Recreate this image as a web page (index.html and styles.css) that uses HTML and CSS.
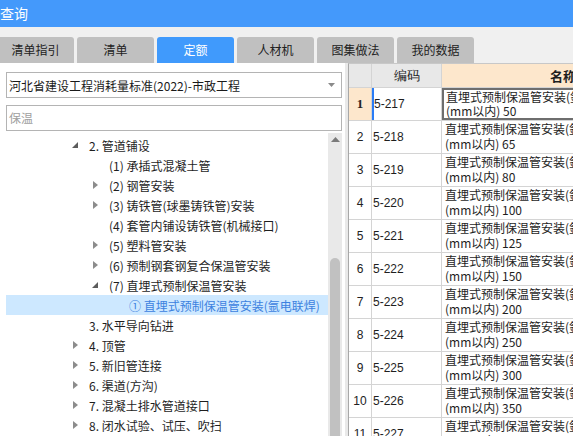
FILE: index.html
```html
<!DOCTYPE html>
<html lang="zh">
<head>
<meta charset="utf-8">
<title>查询</title>
<link rel="stylesheet" href="styles.css">
</head>
<body>
<div class="app">
  <div class="titlebar">查询</div>
  <div class="tabs">
    <div class="tab">清单指引</div>
    <div class="tab">清单</div>
    <div class="tab active">定额</div>
    <div class="tab">人材机</div>
    <div class="tab">图集做法</div>
    <div class="tab">我的数据</div>
  </div>
  <div class="main">
    <div class="left">
      <div class="select">
        <span>河北省建设工程消耗量标准(2022)-市政工程</span>
        <svg class="caret" width="7" height="4" viewBox="0 0 7 4"><polygon points="0,0 7,0 3.5,4" fill="#8a8a8a"/></svg>
      </div>
      <div class="search">保温</div>
      <div class="tree">
        <div class="list">
          <div class="node l1"><span class="arr"><svg width="6" height="6" viewBox="0 0 6 6"><polygon points="6,0 6,6 0,6" fill="#5c5c5c"/></svg></span><span class="txt">2. 管道铺设</span></div>
          <div class="node l2"><span class="arr"></span><span class="txt">(1) 承插式混凝土管</span></div>
          <div class="node l2"><span class="arr"><svg width="5" height="8" viewBox="0 0 5 8"><polygon points="0,0 5,4 0,8" fill="#8c8c8c"/></svg></span><span class="txt">(2) 钢管安装</span></div>
          <div class="node l2"><span class="arr"><svg width="5" height="8" viewBox="0 0 5 8"><polygon points="0,0 5,4 0,8" fill="#8c8c8c"/></svg></span><span class="txt">(3) 铸铁管(球墨铸铁管)安装</span></div>
          <div class="node l2"><span class="arr"></span><span class="txt">(4) 套管内铺设铸铁管(机械接口)</span></div>
          <div class="node l2"><span class="arr"><svg width="5" height="8" viewBox="0 0 5 8"><polygon points="0,0 5,4 0,8" fill="#8c8c8c"/></svg></span><span class="txt">(5) 塑料管安装</span></div>
          <div class="node l2"><span class="arr"><svg width="5" height="8" viewBox="0 0 5 8"><polygon points="0,0 5,4 0,8" fill="#8c8c8c"/></svg></span><span class="txt">(6) 预制钢套钢复合保温管安装</span></div>
          <div class="node l2"><span class="arr"><svg width="6" height="6" viewBox="0 0 6 6"><polygon points="6,0 6,6 0,6" fill="#5c5c5c"/></svg></span><span class="txt">(7) 直埋式预制保温管安装</span></div>
          <div class="node l3 selected"><span class="arr"></span><span class="txt">① 直埋式预制保温管安装(氩电联焊)</span></div>
          <div class="node l1"><span class="arr"></span><span class="txt">3. 水平导向钻进</span></div>
          <div class="node l1"><span class="arr"><svg width="5" height="8" viewBox="0 0 5 8"><polygon points="0,0 5,4 0,8" fill="#8c8c8c"/></svg></span><span class="txt">4. 顶管</span></div>
          <div class="node l1"><span class="arr"><svg width="5" height="8" viewBox="0 0 5 8"><polygon points="0,0 5,4 0,8" fill="#8c8c8c"/></svg></span><span class="txt">5. 新旧管连接</span></div>
          <div class="node l1"><span class="arr"><svg width="5" height="8" viewBox="0 0 5 8"><polygon points="0,0 5,4 0,8" fill="#8c8c8c"/></svg></span><span class="txt">6. 渠道(方沟)</span></div>
          <div class="node l1"><span class="arr"><svg width="5" height="8" viewBox="0 0 5 8"><polygon points="0,0 5,4 0,8" fill="#8c8c8c"/></svg></span><span class="txt">7. 混凝土排水管道接口</span></div>
          <div class="node l1"><span class="arr"><svg width="5" height="8" viewBox="0 0 5 8"><polygon points="0,0 5,4 0,8" fill="#8c8c8c"/></svg></span><span class="txt">8. 闭水试验、试压、吹扫</span></div>
        </div>
        <div class="vscroll">
          <svg class="up" width="9" height="5" viewBox="0 0 9 5"><polygon points="0,5 9,5 4.5,0" fill="#7a7a7a"/></svg>
          <div class="thumb"></div>
        </div>
      </div>
    </div>
    <div class="right">
      <div class="grid">
        <div class="row head">
          <div class="c num"></div>
          <div class="c code">编码</div>
          <div class="c name">名称</div>
        </div>
        <div class="row cur">
          <div class="c num">1</div>
          <div class="c code">5-217</div>
          <div class="c name"><div>直埋式预制保温管安装(氩电联焊) 公称直径</div><div>(mm以内) 50</div></div>
        </div>
        <div class="row"><div class="c num">2</div><div class="c code">5-218</div><div class="c name"><div>直埋式预制保温管安装(氩电联焊) 公称直径</div><div>(mm以内) 65</div></div></div>
        <div class="row"><div class="c num">3</div><div class="c code">5-219</div><div class="c name"><div>直埋式预制保温管安装(氩电联焊) 公称直径</div><div>(mm以内) 80</div></div></div>
        <div class="row"><div class="c num">4</div><div class="c code">5-220</div><div class="c name"><div>直埋式预制保温管安装(氩电联焊) 公称直径</div><div>(mm以内) 100</div></div></div>
        <div class="row"><div class="c num">5</div><div class="c code">5-221</div><div class="c name"><div>直埋式预制保温管安装(氩电联焊) 公称直径</div><div>(mm以内) 125</div></div></div>
        <div class="row"><div class="c num">6</div><div class="c code">5-222</div><div class="c name"><div>直埋式预制保温管安装(氩电联焊) 公称直径</div><div>(mm以内) 150</div></div></div>
        <div class="row"><div class="c num">7</div><div class="c code">5-223</div><div class="c name"><div>直埋式预制保温管安装(氩电联焊) 公称直径</div><div>(mm以内) 200</div></div></div>
        <div class="row"><div class="c num">8</div><div class="c code">5-224</div><div class="c name"><div>直埋式预制保温管安装(氩电联焊) 公称直径</div><div>(mm以内) 250</div></div></div>
        <div class="row"><div class="c num">9</div><div class="c code">5-225</div><div class="c name"><div>直埋式预制保温管安装(氩电联焊) 公称直径</div><div>(mm以内) 300</div></div></div>
        <div class="row"><div class="c num">10</div><div class="c code">5-226</div><div class="c name"><div>直埋式预制保温管安装(氩电联焊) 公称直径</div><div>(mm以内) 350</div></div></div>
        <div class="row"><div class="c num">11</div><div class="c code">5-227</div><div class="c name"><div>直埋式预制保温管安装(氩电联焊) 公称直径</div><div>(mm以内) 400</div></div></div>
      </div>
    </div>
  </div>
</div>
</body>
</html>
```
FILE: styles.css
```css
* { box-sizing: border-box; }
html, body { margin: 0; padding: 0; }
body {
  width: 573px;
  height: 436px;
  overflow: hidden;
  font-family: "Noto Sans CJK SC", "Microsoft YaHei", sans-serif;
  font-size: 12px;
  color: #1e1e1e;
  background: #f0f0f0;
}
.app { width: 573px; height: 436px; display: flex; flex-direction: column; overflow: hidden; }
.titlebar {
  height: 27px;
  background: #4499fb;
  color: #fff;
  font-size: 14px;
  line-height: 27px;
  padding-left: 0;
  flex: none;
}
.tabs {
  height: 36px;
  padding-top: 10px;
  background: #f0f0f0;
  display: flex;
  gap: 3px;
  margin-left: -3px;
  flex: none;
}
.tab {
  width: 77px;
  height: 26px;
  background: #c0c0c0;
  border-radius: 3px 3px 0 0;
  text-align: center;
  line-height: 26px;
  color: #222;
}
.tab.active { background: #409afc; color: #fff; }
.main { flex: 1; display: flex; min-height: 0; }
.left {
  width: 345px;
  background: #fff;
  display: flex;
  flex-direction: column;
  flex: none;
}
.select {
  margin: 9px 0 0 6px;
  width: 336px;
  height: 26px;
  border: 1px solid #b4b4b4;
  display: flex;
  align-items: center;
  justify-content: space-between;
  padding: 0 6px 0 2px;
  color: #1a1a1a;
}
.search {
  margin: 7px 0 0 6px;
  width: 336px;
  height: 26px;
  border: 1px solid #b4b4b4;
  line-height: 24px;
  padding-left: 2px;
  color: #a0a0a0;
}
.tree { flex: 1; display: flex; margin: 2px 0 0 6px; min-height: 0; }
.list { width: 322px; padding-top: 2px; }
.node { height: 20px; display: flex; align-items: center; white-space: nowrap; }
.node.l1 { padding-left: 62px; }
.node.l2 { padding-left: 82px; }
.node.l3 { padding-left: 102px; }
.arr { width: 14px; display: flex; justify-content: center; align-items: center; flex: none; }
.txt { margin-left: 7px; }
.node.selected { background: #cde8ff; color: #3c82e0; }
.vscroll {
  width: 14px;
  background: #e9e9e9;
  display: flex;
  flex-direction: column;
  align-items: center;
  padding-top: 4px;
}
.up { flex: none; }
.thumb {
  width: 10px;
  margin-top: 116px;
  flex: 1;
  background: #c1c1c1;
  border-radius: 5px 5px 0 0;
}
.right {
  flex: 1;
  border-left: 3px solid #e9e9e9;
  background: #fff;
  overflow: hidden;
}
.grid {
  border-left: 1px solid #a8a8a8;
  border-top: 1px solid #c8c8c8;
  width: 400px;
  font-family: "Noto Sans CJK SC", "SimSun", sans-serif;
}
.row {
  display: grid;
  grid-template-columns: 23px 70px 240px;
  height: 33px;
  border-bottom: 1px solid #d4d4d4;
}
.row.head { height: 24px; }
.c { border-right: 1px solid #d4d4d4; overflow: hidden; white-space: nowrap; }
.head .c { background: #e8e8e8; line-height: 23px; text-align: center; font-size: 13px; }
.head .name { background: #fde7cc; font-weight: bold; padding-right: 0; }
.num { text-align: center; line-height: 32px; color: #222; font-family: "Liberation Sans", sans-serif; font-size: 12px; }
.code { line-height: 32px; padding-left: 1px; font-family: "Liberation Sans", sans-serif; font-size: 12px; }
.name { padding: 0 0 0 3px; line-height: 15px; font-size: 12px; }
.cur .num { background: #fde7cc; font-weight: bold; font-family: "Liberation Serif", serif; font-size: 13px; }
.cur .code { border-left: 2px solid #2a7cf6; padding-left: 0; }
.cur .name { border: 2px solid #6e6e6e; border-right: none; padding: 0 0 0 2px; line-height: 14px; }
```
